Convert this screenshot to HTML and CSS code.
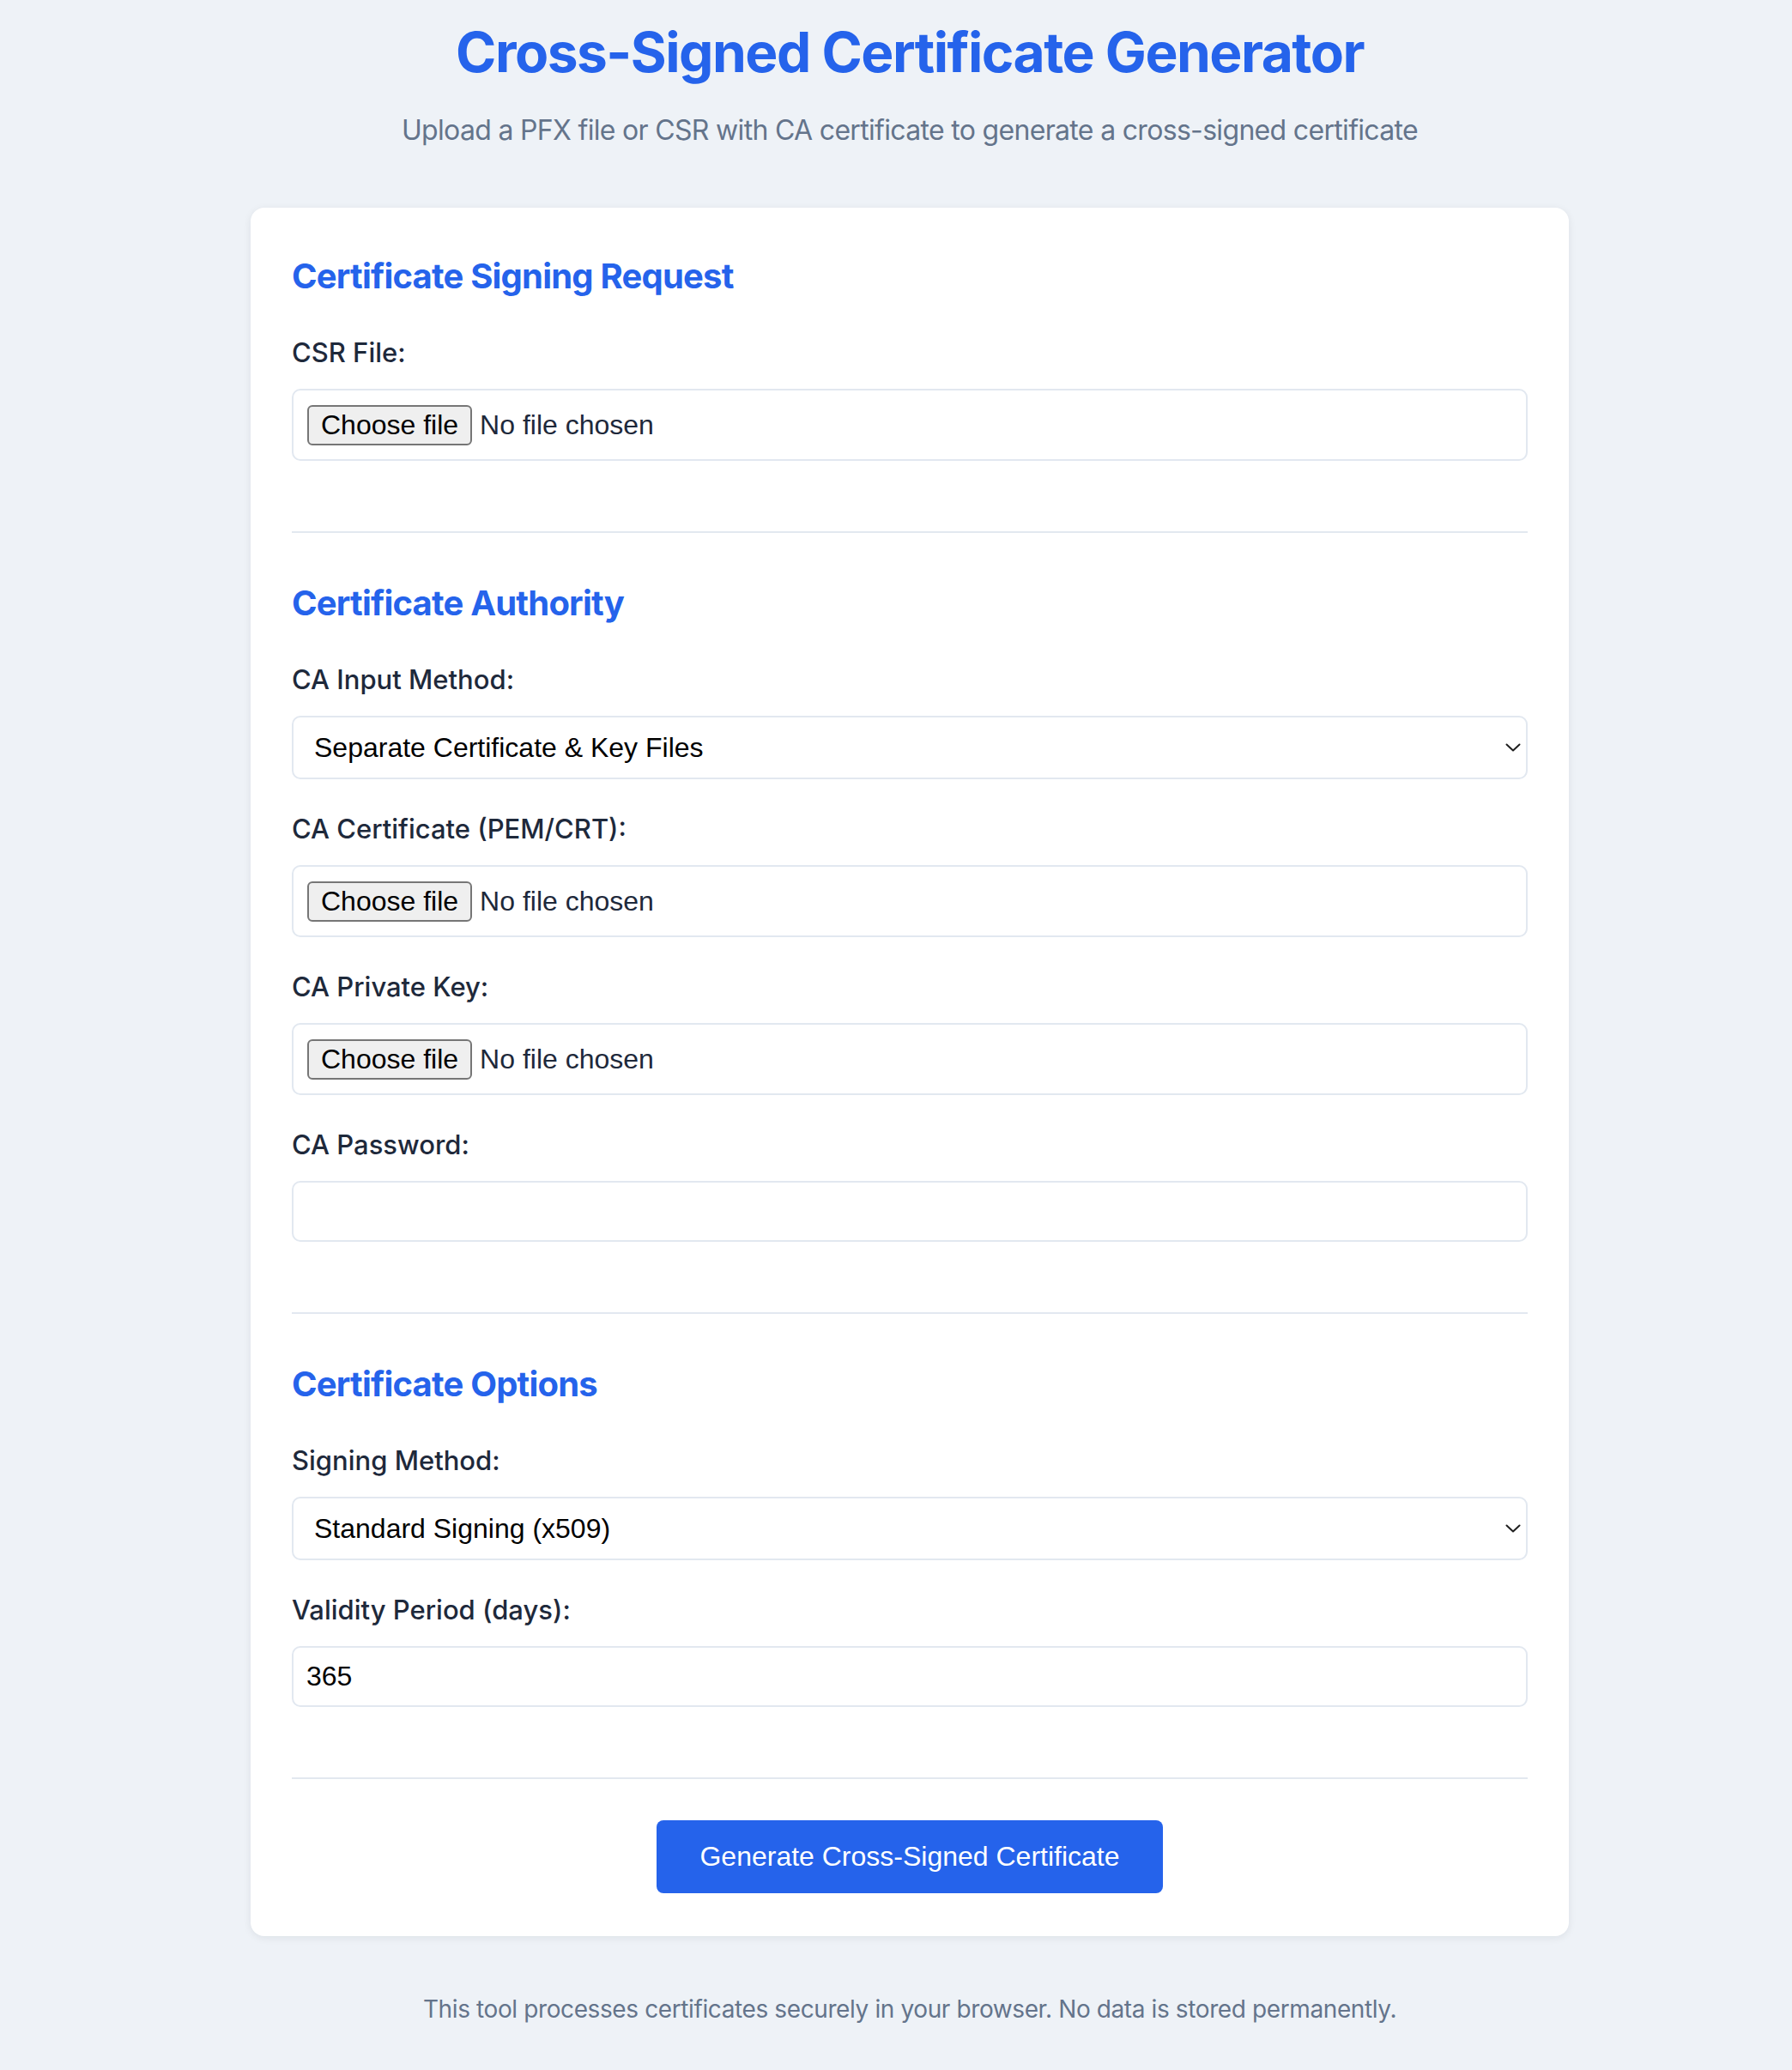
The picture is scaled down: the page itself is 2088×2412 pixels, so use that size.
FILE: index.html
```html
<!DOCTYPE html>
<html lang="en">
<head>
<meta charset="utf-8">
<title>Cross-Signed Certificate Generator</title>
<link rel="stylesheet" href="styles.css">
</head>
<body>
<div class="page">
  <header class="header">
    <h1 class="title">Cross-Signed Certificate Generator</h1>
    <p class="subtitle">Upload a PFX file or CSR with CA certificate to generate a cross-signed certificate</p>
  </header>

  <main class="card">
    <section class="section">
      <h2 class="section-title">Certificate Signing Request</h2>
      <div class="field">
        <label class="label">CSR File:</label>
        <div class="file-input"><span class="file-btn">Choose file</span><span class="file-name">No file chosen</span></div>
      </div>
    </section>

    <section class="section">
      <h2 class="section-title">Certificate Authority</h2>
      <div class="field">
        <label class="label" for="ca-method">CA Input Method:</label>
        <div class="select-wrap">
          <select class="select" id="ca-method">
            <option>Separate Certificate &amp; Key Files</option>
          </select>
          <svg class="chevron" width="18" height="10" viewBox="0 0 18 10"><path d="M1.5 1.5 L9 8.5 L16.5 1.5" fill="none" stroke="#1f1f1f" stroke-width="2" stroke-linecap="round" stroke-linejoin="round"/></svg>
        </div>
      </div>
      <div class="field">
        <label class="label">CA Certificate (PEM/CRT):</label>
        <div class="file-input"><span class="file-btn">Choose file</span><span class="file-name">No file chosen</span></div>
      </div>
      <div class="field">
        <label class="label">CA Private Key:</label>
        <div class="file-input"><span class="file-btn">Choose file</span><span class="file-name">No file chosen</span></div>
      </div>
      <div class="field">
        <label class="label" for="ca-pass">CA Password:</label>
        <input class="text-input" id="ca-pass" type="password">
      </div>
    </section>

    <section class="section">
      <h2 class="section-title">Certificate Options</h2>
      <div class="field">
        <label class="label" for="sign-method">Signing Method:</label>
        <div class="select-wrap">
          <select class="select" id="sign-method">
            <option>Standard Signing (x509)</option>
          </select>
          <svg class="chevron" width="18" height="10" viewBox="0 0 18 10"><path d="M1.5 1.5 L9 8.5 L16.5 1.5" fill="none" stroke="#1f1f1f" stroke-width="2" stroke-linecap="round" stroke-linejoin="round"/></svg>
        </div>
      </div>
      <div class="field">
        <label class="label" for="validity">Validity Period (days):</label>
        <input class="text-input" id="validity" type="text" value="365">
      </div>
    </section>

    <div class="actions">
      <button class="primary-btn" type="button">Generate Cross-Signed Certificate</button>
    </div>
  </main>

  <footer class="footer">This tool processes certificates securely in your browser. No data is stored permanently.</footer>
</div>
</body>
</html>
```

FILE: styles.css
```css
* {
  box-sizing: border-box;
}

html, body {
  margin: 0;
  padding: 0;
}

body {
  background: #eef2f7;
  font-family: Inter, "Noto Sans", sans-serif;
  color: #1e293b;
}

.page {
  padding: 0 0 40px 32px;
}

.header {
  text-align: center;
  padding-top: 22px;
}

.title {
  margin: 0;
  font-size: 64px;
  line-height: 77px;
  font-weight: 700;
  letter-spacing: -1.5px;
  color: #2563eb;
}

.subtitle {
  margin: 29px 0 0;
  font-size: 32px;
  line-height: 48px;
  letter-spacing: -0.68px;
  color: #64748b;
}

.card {
  width: 1536px;
  margin: 66px auto 0;
  background: #ffffff;
  border-radius: 16px;
  box-shadow: 0 2px 10px rgba(15, 23, 42, 0.08);
  padding: 56px 48px 50px;
}

.section {
  padding-bottom: 82px;
  border-bottom: 2px solid #e2e8f0;
  margin-bottom: 48px;
}

.section + .section {
  padding-top: 10px;
}

.section-title {
  margin: 0 0 42px;
  font-size: 40px;
  line-height: 48px;
  font-weight: 700;
  letter-spacing: -0.8px;
  color: #2563eb;
}

.field + .field {
  margin-top: 35px;
}

.label {
  display: block;
  font-size: 31px;
  line-height: 45px;
  font-weight: 500;
  color: #1e293b;
  margin-bottom: 20px;
}

.file-input {
  display: flex;
  align-items: center;
  height: 84px;
  padding: 0 16px;
  border: 2px solid #e2e8f0;
  border-radius: 10px;
  background: #ffffff;
  font-family: "Liberation Sans", Arial, sans-serif;
  font-size: 32px;
}

.file-btn {
  display: flex;
  align-items: center;
  height: 47px;
  padding: 0 14px;
  background: #efefef;
  border: 2px solid #767676;
  border-radius: 6px;
  color: #000000;
}

.file-name {
  margin-left: 9px;
  color: #1e293b;
}

.select-wrap {
  position: relative;
}

.select {
  display: block;
  width: 100%;
  height: 74px;
  padding: 0 24px;
  border: 2px solid #e2e8f0;
  border-radius: 10px;
  background: #ffffff;
  font-family: "Liberation Sans", Arial, sans-serif;
  font-size: 32px;
  color: #000000;
  appearance: none;
  -webkit-appearance: none;
  outline: none;
}

.chevron {
  position: absolute;
  right: 8px;
  top: 32px;
  pointer-events: none;
}

.text-input {
  display: block;
  width: 100%;
  height: 71px;
  padding: 0 15px;
  border: 2px solid #e2e8f0;
  border-radius: 10px;
  background: #ffffff;
  font-family: "Liberation Sans", Arial, sans-serif;
  font-size: 32px;
  color: #000000;
  outline: none;
}

.actions {
  display: flex;
  justify-content: center;
}

.primary-btn {
  height: 85px;
  padding: 0 50px;
  border: none;
  border-radius: 8px;
  background: #2563eb;
  color: #ffffff;
  font-family: "Liberation Sans", Arial, sans-serif;
  font-size: 32px;
  cursor: pointer;
}

.footer {
  margin-top: 64px;
  text-align: center;
  font-size: 28px;
  line-height: 42px;
  letter-spacing: -0.39px;
  color: #64748b;
}
```
